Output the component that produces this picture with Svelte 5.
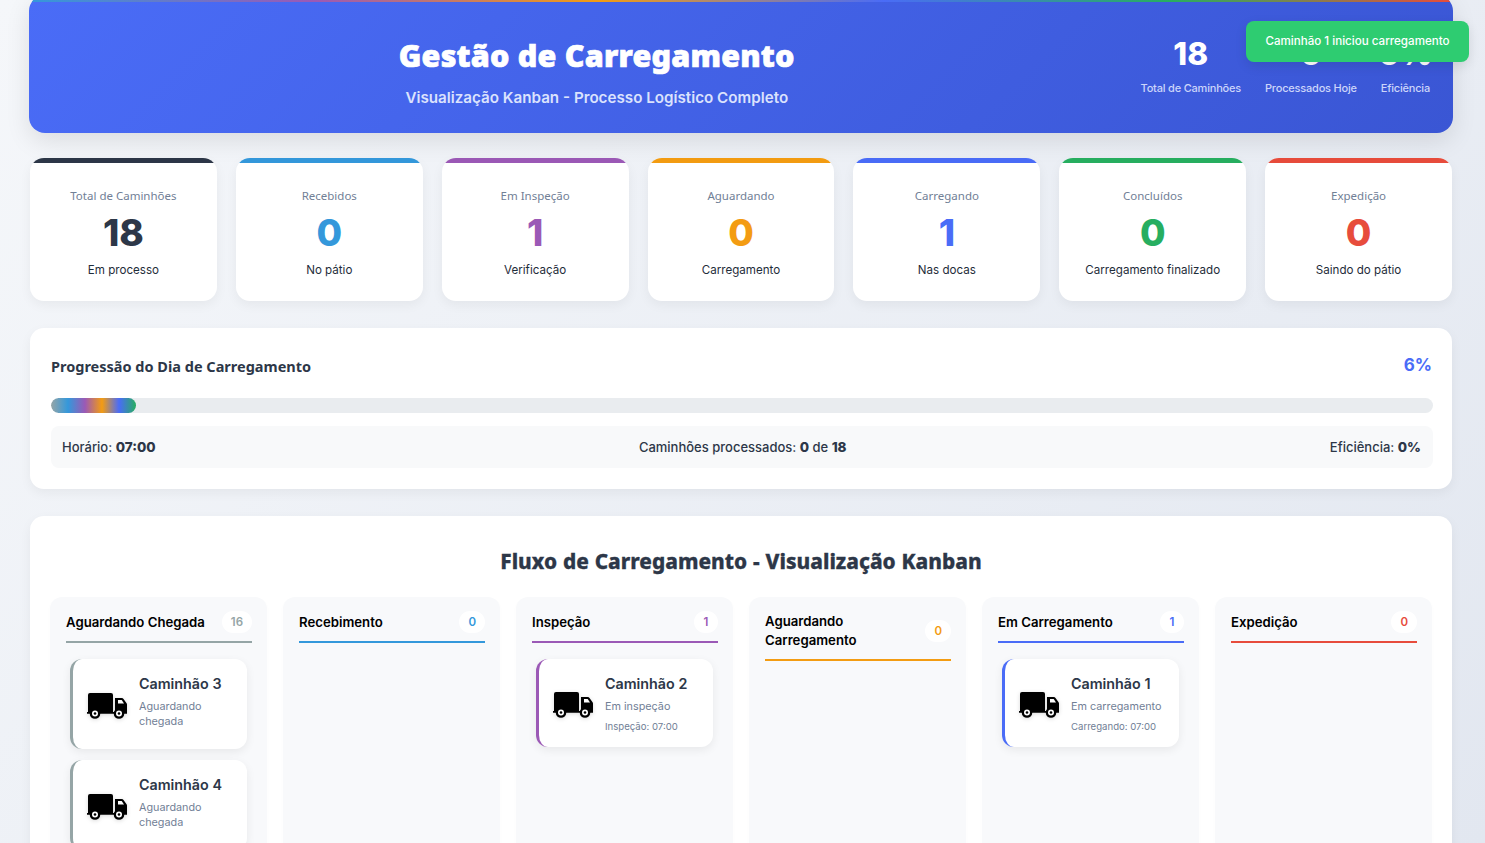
<script>
  const stats = [
    { label: 'Total de Caminhões', value: 18, note: 'Em processo', color: '#2d3748' },
    { label: 'Recebidos', value: 0, note: 'No pátio', color: '#3498db' },
    { label: 'Em Inspeção', value: 1, note: 'Verificação', color: '#9b59b6' },
    { label: 'Aguardando', value: 0, note: 'Carregamento', color: '#f39c12' },
    { label: 'Carregando', value: 1, note: 'Nas docas', color: '#4a6cf7' },
    { label: 'Concluídos', value: 0, note: 'Carregamento finalizado', color: '#27ae60' },
    { label: 'Expedição', value: 0, note: 'Saindo do pátio', color: '#e74c3c' }
  ];

  const columns = [
    {
      title: 'Aguardando Chegada', count: 16, color: '#95a5a6',
      trucks: [
        { name: 'Caminhão 3', status: 'Aguardando chegada' },
        { name: 'Caminhão 4', status: 'Aguardando chegada' }
      ]
    },
    { title: 'Recebimento', count: 0, color: '#3498db', trucks: [] },
    {
      title: 'Inspeção', count: 1, color: '#9b59b6',
      trucks: [{ name: 'Caminhão 2', status: 'Em inspeção', time: 'Inspeção: 07:00' }]
    },
    { title: 'Aguardando Carregamento', count: 0, color: '#f39c12', trucks: [] },
    {
      title: 'Em Carregamento', count: 1, color: '#4a6cf7',
      trucks: [{ name: 'Caminhão 1', status: 'Em carregamento', time: 'Carregando: 07:00' }]
    },
    { title: 'Expedição', count: 0, color: '#e74c3c', trucks: [] }
  ];
</script>

<div class="page">
  <header class="top">
    <div class="rainbow"></div>
    <div class="heading">
      <h1>Gestão de Carregamento</h1>
      <p>Visualização Kanban - Processo Logístico Completo</p>
    </div>
    <div class="head-stats">
      <div class="hs"><strong>18</strong><span>Total de Caminhões</span></div>
      <div class="hs"><strong>0</strong><span>Processados Hoje</span></div>
      <div class="hs"><strong>0%</strong><span>Eficiência</span></div>
    </div>
  </header>

  <section class="stats">
    {#each stats as s}
      <div class="stat">
        <div class="bar" style="background: {s.color}"></div>
        <div class="stat-label">{s.label}</div>
        <div class="stat-value" style="color: {s.color}">{s.value}</div>
        <div class="stat-note">{s.note}</div>
      </div>
    {/each}
  </section>

  <section class="panel progress">
    <div class="progress-head">
      <h2>Progressão do Dia de Carregamento</h2>
      <span class="pct">6%</span>
    </div>
    <div class="track"><div class="fill" style="width: 6.15%"></div></div>
    <div class="info">
      <span>Horário: <b>07:00</b></span>
      <span>Caminhões processados: <b>0</b> de <b>18</b></span>
      <span>Eficiência: <b>0%</b></span>
    </div>
  </section>

  <section class="panel kanban">
    <h2 class="kanban-title">Fluxo de Carregamento - Visualização Kanban</h2>
    <div class="cols">
      {#each columns as c}
        <div class="col">
          <div class="col-head" style="border-color: {c.color}">
            <span class="col-title">{c.title}</span>
            <span class="count" style="color: {c.color}">{c.count}</span>
          </div>
          {#each c.trucks as t}
            <div class="truck" class:timed={t.time} style="border-left-color: {c.color}">
              <svg class="icon" viewBox="0 0 40 28" aria-hidden="true">
                <path d="M3 2h21a2 2 0 0 1 2 2v18H1V4a2 2 0 0 1 2-2z" />
                <path d="M28 7h6.500c1 0 1.700.4 2.200 1.200l2.700 3.800c.4.5.6 1 .6 1.600V22H28z" />
                <path d="M0 21h40v1.800H0z" />
                <circle cx="8" cy="22.500" r="5.300" />
                <circle cx="8" cy="22.500" r="3" fill="#fff" />
                <circle cx="8" cy="22.500" r="1.300" />
                <circle cx="32" cy="22.500" r="5.300" />
                <circle cx="32" cy="22.500" r="3" fill="#fff" />
                <circle cx="32" cy="22.500" r="1.300" />
                <path d="M31 9h3.700l2.300 3.500h-6z" fill="#fff" />
              </svg>
              <div class="truck-text">
                <div class="truck-name">{t.name}</div>
                <div class="truck-status">{t.status}</div>
                {#if t.time}<div class="truck-time">{t.time}</div>{/if}
              </div>
            </div>
          {/each}
        </div>
      {/each}
    </div>
  </section>

  <div class="toast">Caminhão 1 iniciou carregamento</div>
</div>

<style>
  :global(body) { margin: 0; overflow: hidden; }
  .page {
    position: relative;
    height: 843px;
    box-sizing: border-box;
    overflow: hidden;
    padding: 0 33px 0 30px;
    background: linear-gradient(135deg, #f5f7fa 0%, #e2e7f0 100%);
    font-family: Inter, "Noto Sans", sans-serif;
    color: #2d3748;
  }

  .top {
    position: relative;
    display: flex;
    align-items: center;
    height: 138px;
    box-sizing: border-box;
    margin: -5px -1px 25px -1px;
    padding: 5px 23px 0 24px;
    border-radius: 16px;
    overflow: hidden;
    color: #fff;
    background: linear-gradient(135deg, #4a6cf7 0%, #3a56d4 100%);
    box-shadow: 0 8px 24px rgba(0, 0, 0, 0.1);
  }
  .rainbow {
    position: absolute;
    left: 0;
    right: 0;
    top: 0;
    height: 7px;
    background: linear-gradient(90deg, #3498db, #9b59b6, #f39c12, #4a6cf7, #27ae60, #e74c3c);
  }
  .heading { flex: 1; text-align: center; margin-top: 9px; }
  h1 {
    margin: 0 0 10px;
    font-family: "Noto Sans", sans-serif;
    font-size: 30.500px;
    line-height: 44px;
    letter-spacing: 0.2px;
    font-weight: 900;
    -webkit-text-stroke: 0.7px #fff;
  }
  .heading p { margin: 0; font-size: 15.200px; line-height: 22px; font-weight: 600; color: #dbe2fd; }
  .head-stats { display: flex; gap: 24px; margin-top: -3px; }
  .hs { display: flex; flex-direction: column; align-items: center; }
  .hs strong {
    display: flex;
    justify-content: center;
    width: 30px;
    white-space: nowrap;
    font-size: 31.500px;
    line-height: 37px;
    font-weight: 800;
  }
  .hs span {
    margin-top: 9px;
    font-size: 11px;
    line-height: 14px;
    letter-spacing: -0.2px;
    font-weight: 500;
    color: #ccd5fa;
  }

  .stats { display: grid; grid-template-columns: repeat(7, 1fr); gap: 19px; }
  .stat {
    height: 143px;
    border-radius: 14px;
    overflow: hidden;
    text-align: center;
    background: #fff;
    box-shadow: 0 4px 12px rgba(0, 0, 0, 0.05);
  }
  .bar { height: 5px; }
  .stat-label {
    margin-top: 25px;
    font-family: "Noto Sans", sans-serif;
    font-size: 11.500px;
    line-height: 16px;
    color: #718096;
  }
  .stat-value {
    margin-top: 7px;
    font-size: 37px;
    line-height: 44px;
    font-weight: 800;
  }
  .stat-note { margin-top: 7px; font-size: 11.600px; line-height: 16px; color: #1f2d3a; }

  .panel {
    background: #fff;
    border-radius: 14px;
    box-shadow: 0 4px 12px rgba(0, 0, 0, 0.05);
  }
  .progress { margin-top: 27px; height: 161px; box-sizing: border-box; padding: 25px 19px 0 21px; }
  .progress-head { display: flex; align-items: center; justify-content: space-between; height: 25px; }
  .progress-head h2 {
    margin: 0;
    font-family: "Noto Sans", sans-serif;
    font-size: 14.500px;
    font-weight: 700;
  }
  .pct { font-size: 17px; font-weight: 700; color: #4a6cf7; margin-right: 1px; margin-top: -1px; }
  .track { margin-top: 20px; height: 15px; border-radius: 8px; overflow: hidden; background: #e9ecef; }
  .fill {
    height: 100%;
    border-radius: 8px;
    background: linear-gradient(90deg, #95a5a6, #3498db, #9b59b6, #f39c12, #4a6cf7, #27ae60);
  }
  .info {
    display: flex;
    justify-content: space-between;
    align-items: center;
    box-sizing: border-box;
    height: 42px;
    margin-top: 13px;
    padding: 0 12px 1px 11px;
    border-radius: 8px;
    background: #f8f9fa;
    font-size: 13px;
    font-weight: 500;
  }
  .info b { font-size: 13.500px; font-weight: 800; }

  .kanban { margin-top: 27px; height: 500px; padding: 0 20px; }
  .kanban-title {
    margin: 0;
    padding-top: 29px;
    text-align: center;
    font-family: "Noto Sans", sans-serif;
    font-size: 20.800px;
    line-height: 33px;
    word-spacing: 0.5px;
    font-weight: 800;
    -webkit-text-stroke: 0.3px #2d3748;
  }
  .cols { display: grid; grid-template-columns: repeat(6, 1fr); gap: 16px; margin-top: 19px; }
  .col {
    height: 420px;
    box-sizing: border-box;
    padding: 0 15px 0 16px;
    border-radius: 12px;
    background: #f8f9fb;
    box-shadow: 0 2px 6px rgba(0, 0, 0, 0.015);
  }
  .col-head {
    display: flex;
    align-items: center;
    justify-content: space-between;
    padding: 15px 0 9px;
    border-bottom: 2px solid;
  }
  .col-title { font-size: 13.200px; line-height: 19px; font-weight: 600; color: #000; }
  .count {
    flex-shrink: 0;
    min-width: 6px;
    margin: -1px 0;
    padding: 0 9px;
    border-radius: 12px;
    text-align: center;
    font-size: 11.500px;
    line-height: 22px;
    font-weight: 600;
    background: #fff;
  }
  .truck {
    display: flex;
    align-items: center;
    gap: 12px;
    box-sizing: border-box;
    min-height: 90px;
    margin: 16px 5px 11px 4px;
    padding: 15px 14px 10px;
    border-left: 3px solid;
    border-radius: 12px;
    background: #fff;
    box-shadow: 0 3px 10px rgba(0, 0, 0, 0.07);
  }
  .truck.timed { min-height: 88px; }
  .truck + .truck { margin-top: 11px; }
  .icon {
    flex-shrink: 0;
    width: 40px;
    height: 28px;
    margin-bottom: 3px;
    fill: #000;
    filter: drop-shadow(0 1px 2px rgba(0, 0, 0, 0.15));
  }
  .truck-text { align-self: flex-start; }
  .truck-name { font-size: 14.300px; line-height: 20px; font-weight: 600; }
  .truck-status { margin-top: 5px; font-size: 10.800px; line-height: 15px; color: #718096; }
  .truck-time { margin-top: 6px; font-size: 9.600px; line-height: 14px; color: #718096; }

  .toast {
    position: absolute;
    top: 21px;
    left: 1246px;
    box-sizing: border-box;
    width: 223px;
    height: 41px;
    border-radius: 8px;
    text-align: center;
    font-size: 11.600px;
    line-height: 40px;
    font-weight: 500;
    color: #fff;
    background: #2ecc71;
    box-shadow: 0 4px 12px rgba(0, 0, 0, 0.1);
  }
</style>
